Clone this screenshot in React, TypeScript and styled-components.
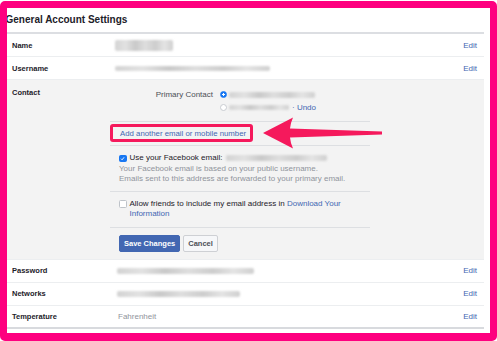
import React from "react";
import styled, { createGlobalStyle } from "styled-components";

const GlobalStyle = createGlobalStyle`
  html, body {
    margin: 0;
    padding: 0;
    background: #ffffff;
  }
  body {
    font-family: "Liberation Sans", Helvetica, Arial, sans-serif;
    color: #1d2129;
  }
`;

const PINK = "#fe007f";
const MARK = "#f5195c";
const BLUE = "#4267b2";

const Frame = styled.div`
  box-sizing: border-box;
  width: 497px;
  height: 340px;
  margin-top: 1px;
  border: 7px solid ${PINK};
  border-bottom-width: 8px;
  border-radius: 5px;
  padding: 0 6px 3px 0;
  overflow: hidden;
  background: #fff;
`;

const Panel = styled.div`
  display: flex;
  flex-direction: column;
`;

const Header = styled.div`
  box-sizing: border-box;
  height: 26px;
  display: flex;
  align-items: center;
  padding-bottom: 2px;
  border-bottom: 2px solid #dcdee2;
`;

const Title = styled.h1`
  margin: 0 0 0 -1.5px;
  font-size: 10px;
  font-weight: bold;
  color: #1d2129;
`;

const Row = styled.div<{ $last?: boolean }>`
  box-sizing: border-box;
  height: 23px;
  display: flex;
  align-items: center;
  padding: 0 7px 0 5px;
  border-bottom: ${(p) => (p.$last ? "2px solid #d8dade" : "1px solid #eceef0")};
`;

const Label = styled.div`
  width: 106px;
  flex-shrink: 0;
  font-size: 7.5px;
  font-weight: bold;
  color: #1d2129;
`;

const Value = styled.div`
  flex: 1;
  display: flex;
  align-items: center;
  font-size: 8px;
  color: #90949c;
`;

const Edit = styled.a`
  font-size: 8px;
  color: ${BLUE};
  cursor: pointer;
`;

const Blur = styled.span<{ $w: number; $h?: number; $ml?: number }>`
  display: inline-block;
  width: ${(p) => p.$w}px;
  height: ${(p) => p.$h ?? 6}px;
  margin-left: ${(p) => p.$ml ?? 0}px;
  border-radius: 2px;
  background: linear-gradient(
    90deg,
    #d3d3d3 0%,
    #e2e2e2 18%,
    #c9c9c9 35%,
    #dedede 52%,
    #cdcdcd 70%,
    #e4e4e4 85%,
    #d0d0d0 100%
  );
  filter: blur(1px);
`;

const ContactSection = styled.div`
  box-sizing: border-box;
  display: flex;
  background: #f3f3f3;
  padding: 8px 0 0 5px;
  border-bottom: 1px solid #eceef0;
`;

const ContactLabel = styled(Label)`
  width: 98px;
  line-height: 10px;
`;

const ContactBody = styled.div`
  width: 260px;
  display: flex;
  flex-direction: column;
`;

const Divider = styled.div`
  height: 1px;
  background: #dddfe2;
`;

const PrimaryBlock = styled.div`
  display: grid;
  grid-template-columns: 110px auto;
  padding-bottom: 7px;
`;

const PrimaryLabel = styled.div`
  font-size: 8px;
  line-height: 13px;
  color: #4b4f56;
  text-align: right;
  padding-right: 7px;
`;

const Options = styled.div`
  display: flex;
  flex-direction: column;
`;

const OptionRow = styled.div`
  height: 13px;
  display: flex;
  align-items: center;
  font-size: 8px;
  color: #90949c;
`;

const Radio = styled.span<{ $on?: boolean }>`
  box-sizing: border-box;
  width: 7px;
  height: 7px;
  border-radius: 50%;
  margin-right: 2px;
  flex-shrink: 0;
  background: ${(p) => (p.$on ? "radial-gradient(circle, #fff 0 1px, #1877f2 1.4px)" : "#fff")};
  border: 1px solid ${(p) => (p.$on ? "#1877f2" : "#c9ccd1")};
`;

const Undo = styled.a`
  color: ${BLUE};
  margin-left: 3px;
`;

const LinkBlock = styled.div`
  position: relative;
  height: 23px;
  padding-left: 10px;
  display: flex;
  align-items: center;
`;

const AddLink = styled.a`
  font-size: 7.8px;
  color: ${BLUE};
  cursor: pointer;
`;

const Highlight = styled.span`
  position: absolute;
  left: 0;
  top: 2px;
  box-sizing: border-box;
  width: 143px;
  height: 18px;
  border: 3px solid ${MARK};
  border-radius: 3px;
  pointer-events: none;
`;

const ArrowMark = styled.svg`
  position: absolute;
  left: 152px;
  top: -6px;
  pointer-events: none;
`;

const Block = styled.div<{ $top: number; $bottom: number }>`
  padding: ${(p) => p.$top}px 0 ${(p) => p.$bottom}px 9px;
  font-size: 8px;
`;

const CheckRow = styled.div`
  display: flex;
  align-items: flex-start;
  line-height: 10.5px;
  color: #1d2129;
`;

const Box = styled.span<{ $on?: boolean }>`
  box-sizing: border-box;
  width: 7.5px;
  height: 7.5px;
  margin: 1.5px 3px 0 0;
  flex-shrink: 0;
  border-radius: 1.5px;
  display: flex;
  align-items: center;
  justify-content: center;
  background: ${(p) => (p.$on ? "#1877f2" : "#fff")};
  border: 1px solid ${(p) => (p.$on ? "#1877f2" : "#bec3c9")};
`;

const CheckText = styled.span`
  display: flex;
  align-items: center;
`;

const Wrapped = styled.span`
  flex: 1;
`;

const BlueLink = styled.a`
  color: ${BLUE};
`;

const Hint = styled.div`
  line-height: 10px;
  color: #90949c;
`;

const Buttons = styled.div`
  display: flex;
  gap: 3px;
  padding: 7px 0 7px 9px;
`;

const Button = styled.button<{ $primary?: boolean }>`
  box-sizing: border-box;
  height: 17px;
  padding: 0 4px;
  font-family: inherit;
  font-size: 7.5px;
  font-weight: bold;
  border-radius: 2px;
  cursor: pointer;
  color: ${(p) => (p.$primary ? "#fff" : "#4b4f56")};
  background: ${(p) => (p.$primary ? BLUE : "#f6f7f9")};
  border: 1px solid ${(p) => (p.$primary ? BLUE : "#ced0d4")};
`;

const Check = () => (
  <svg width="5" height="5" viewBox="0 0 10 10">
    <path d="M2 5.4 L4.2 7.6 L8.2 2.6" fill="none" stroke="#fff" strokeWidth="1.8" />
  </svg>
);

const Arrow = () => (
  <ArrowMark width="122" height="34" viewBox="0 0 122 34">
    <path
      d="M1 17 L31 1.5 Q28.5 7 28 12.5 L120 15.5 L120 18.5 L28 21.5 Q28.5 27 31 32.5 Z"
      fill={MARK}
    />
  </ArrowMark>
);

const App: React.FC = () => {
  return (
    <>
      <GlobalStyle />
      <Frame>
        <Panel>
          <Header>
            <Title>General Account Settings</Title>
          </Header>
          <Row>
            <Label>Name</Label>
            <Value>
              <Blur $w={58} $h={11} $ml={-3} />
            </Value>
            <Edit>Edit</Edit>
          </Row>
          <Row>
            <Label>Username</Label>
            <Value>
              <Blur $w={155} $h={5} $ml={-3} />
            </Value>
            <Edit>Edit</Edit>
          </Row>
          <ContactSection>
            <ContactLabel>Contact</ContactLabel>
            <ContactBody>
              <PrimaryBlock>
                <PrimaryLabel>Primary Contact</PrimaryLabel>
                <Options>
                  <OptionRow>
                    <Radio $on />
                    <Blur $w={86} $h={6} />
                  </OptionRow>
                  <OptionRow>
                    <Radio />
                    <Blur $w={60} $h={5} />
                    <Undo>· Undo</Undo>
                  </OptionRow>
                </Options>
              </PrimaryBlock>
              <Divider />
              <LinkBlock>
                <AddLink>Add another email or mobile number</AddLink>
                <Highlight />
                <Arrow />
              </LinkBlock>
              <Divider />
              <Block $top={7} $bottom={7}>
                <CheckRow>
                  <Box $on>
                    <Check />
                  </Box>
                  <CheckText>
                    Use your Facebook email:
                    <Blur $w={101} $h={6} $ml={4} />
                  </CheckText>
                </CheckRow>
                <Hint>Your Facebook email is based on your public username.</Hint>
                <Hint>Emails sent to this address are forwarded to your primary email.</Hint>
              </Block>
              <Divider />
              <Block $top={7} $bottom={7}>
                <CheckRow>
                  <Box />
                  <Wrapped>
                    Allow friends to include my email address in{" "}
                    <BlueLink>Download Your</BlueLink> <BlueLink>Information</BlueLink>
                  </Wrapped>
                </CheckRow>
              </Block>
              <Divider />
              <Buttons>
                <Button $primary>Save Changes</Button>
                <Button>Cancel</Button>
              </Buttons>
            </ContactBody>
          </ContactSection>
          <Row>
            <Label>Password</Label>
            <Value>
              <Blur $w={137} $h={6} $ml={-1} />
            </Value>
            <Edit>Edit</Edit>
          </Row>
          <Row>
            <Label>Networks</Label>
            <Value>
              <Blur $w={123} $h={6} $ml={-1} />
            </Value>
            <Edit>Edit</Edit>
          </Row>
          <Row $last>
            <Label>Temperature</Label>
            <Value>Fahrenheit</Value>
            <Edit>Edit</Edit>
          </Row>
        </Panel>
      </Frame>
    </>
  );
};

export default App;
